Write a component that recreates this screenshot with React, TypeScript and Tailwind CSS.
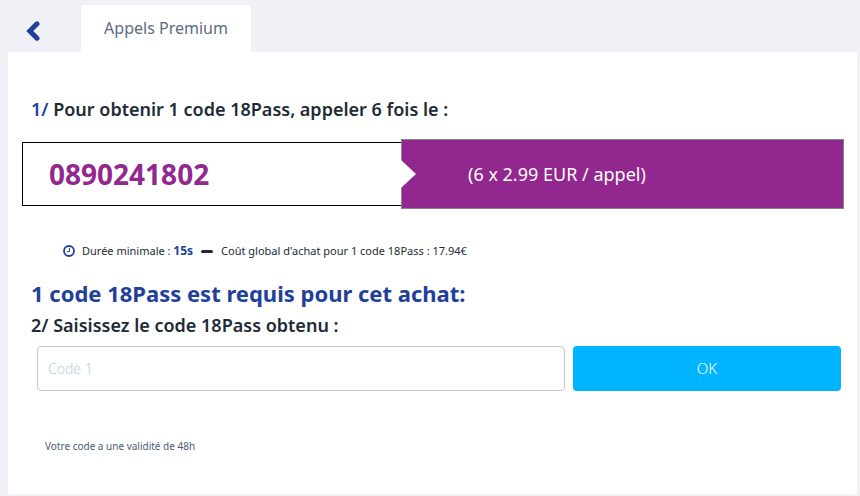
import { useState } from "react";

function BackArrow() {
  return (
    <svg viewBox="0 0 14 22" className="h-[22px] w-[14px]" fill="none" stroke="#21409a" strokeWidth="5" aria-hidden="true">
      <path d="M11 3.8 3.8 11l7.2 7.2" strokeLinecap="round" />
    </svg>
  );
}

function Clock() {
  return (
    <svg viewBox="0 0 12 12" className="size-3 shrink-0" fill="none" stroke="#21409a" aria-hidden="true">
      <circle cx="6" cy="6" r="5" strokeWidth="1.8" />
      <path d="M6.5 3v3.5H4" strokeWidth="1" />
    </svg>
  );
}

function PhoneBanner() {
  return (
    <div className="mt-4 mr-[13px] ml-3.5 grid grid-cols-[379fr_443fr] items-center">
      <div className="flex h-16 items-center border border-r-0 border-black pl-[26px]">
        <span className="text-[28px] leading-9 font-bold text-[#92278f]">0890241802</span>
      </div>
      <div className="relative flex h-[70px] items-center border border-[#868686] bg-[#92278f] pl-[66px]">
        <svg viewBox="0 0 15 28" className="absolute top-5 -left-px h-7 w-[15px]" aria-hidden="true">
          <path d="M0 0 15 14 0 28Z" fill="#fff" />
        </svg>
        <span className="text-lg text-white">(6 x 2.99 EUR / appel)</span>
      </div>
    </div>
  );
}

export default function App() {
  const [code, setCode] = useState("");

  return (
    <div className="min-h-screen bg-[#f0f0f6] pt-[5px] pr-[3px] pb-0.5 pl-2 font-['Noto_Sans',sans-serif] text-[#212b35]">
      <header className="flex">
        <button type="button" aria-label="Retour" className="flex w-[73px] items-center pt-1 pl-[18px]">
          <BackArrow />
        </button>
        <div className="flex h-[47px] w-[170px] items-center justify-center bg-white pb-0.5 text-base text-[#5b6b82]">
          Appels Premium
        </div>
      </header>

      <main className="bg-white pt-11 pb-10">
        <h2 className="pl-[23px] text-lg leading-[27px] font-semibold">
          <span className="text-[#21409a]">1/</span> Pour obtenir 1 code 18Pass, appeler 6 fois le :
        </h2>

        <PhoneBanner />

        <div className="mt-8 flex items-center pl-[55px] text-[11px] leading-5">
          <Clock />
          <span className="ml-[7px]">
            Durée minimale : <strong className="text-xs text-[#21409a]">15s</strong>
          </span>
          <span className="mx-2 h-[3px] w-3 rounded-sm bg-[#212b35]" />
          <span>Coût global d'achat pour 1 code 18Pass : 17.94€</span>
        </div>

        <h1 className="mt-3.5 pl-[23px] text-[22px] leading-9 font-bold text-[#21409a]">
          1 code 18Pass est requis pour cet achat:
        </h1>

        <form onSubmit={(e) => e.preventDefault()}>
          <label htmlFor="code" className="block pl-[23px] text-lg leading-7 font-semibold">
            2/ Saisissez le code 18Pass obtenu :
          </label>
          <div className="mt-[7px] mr-4 ml-[29px] flex gap-2">
            <input
              id="code"
              type="text"
              value={code}
              onChange={(e) => setCode(e.target.value)}
              placeholder="Code 1"
              className="h-[45px] min-w-0 flex-1 rounded border border-[#c8c8c8] px-2.5 text-sm font-light placeholder:text-[#b8cce0]"
            />
            <button type="submit" className="h-[45px] w-1/3 rounded bg-[#00b4ff] text-[15px] font-light text-white">
              OK
            </button>
          </div>
        </form>

        <p className="mt-[47px] pl-[37px] text-[10px] leading-4 text-[#4d5b73]">Votre code a une validité de 48h</p>
      </main>
    </div>
  );
}
